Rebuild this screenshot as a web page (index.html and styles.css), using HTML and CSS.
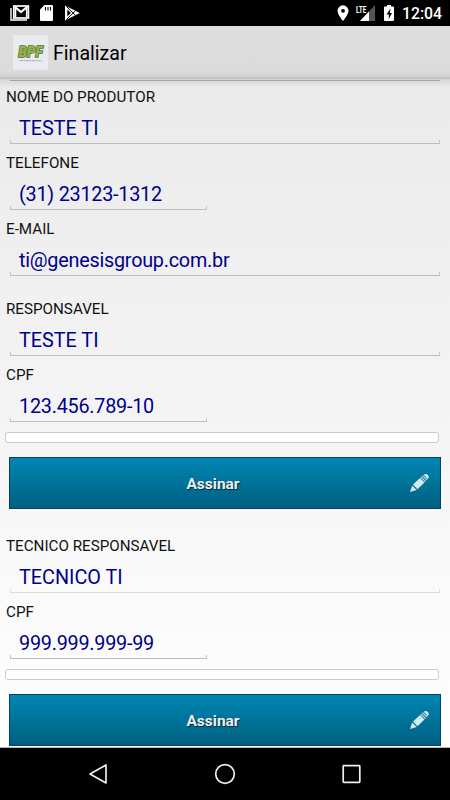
FILE: index.html
```html
<!DOCTYPE html>
<html lang="pt-BR">
<head>
  <meta charset="UTF-8">
  <meta name="viewport" content="width=device-width, initial-scale=1.0">
  <title>Finalizar</title>
  <link rel="stylesheet" href="styles.css">
</head>
<body>
  <div class="screen">
    <div class="status-bar">
      <svg class="status-icons" width="90" height="26" viewBox="0 0 90 26">
        <path d="M11 8v12h16" fill="none" stroke="#fff" stroke-width="1.4"/>
        <rect x="13.8" y="6" width="14.6" height="12" fill="none" stroke="#fff" stroke-width="1.7"/>
        <path d="M15 7l6 5 6-5" fill="none" stroke="#fff" stroke-width="2.2"/>
        <path d="M15.500 7v10M26.700 7v10" stroke="#fff" stroke-width="1.6"/>
        <path d="M44.5 5H52q1 0 1 1v14q0 1-1 1H41q-1 0-1-1V9.5z" fill="#fff"/>
        <path d="M45.5 7v3.5M48 7v3.5M50.5 7v3.5" stroke="#000" stroke-width="1.1"/>
        <path d="M65 5.5v15L79.8 13z" fill="#fff"/>
        <path d="M66.500 6.500l9 8.800M66.500 19.500l9-8.800" fill="none" stroke="#000" stroke-width="1"/>
        <path d="M67.300 9.500v7l3.600-3.500z" fill="#000"/>
      </svg>
      <svg class="status-icons" width="65" height="26" viewBox="337 0 65 26">
        <path d="M343 5.3a5.5 5.5 0 0 0-5.5 5.5c0 4 5.5 10.2 5.5 10.2s5.5-6.2 5.5-10.2A5.5 5.5 0 0 0 343 5.3z" fill="#fff"/>
        <circle cx="343" cy="10.8" r="1.900" fill="#000"/>
        <path d="M375 5v16h-15z" fill="#555"/>
        <path d="M369 11.4V21h-9z" fill="#fff"/>
        <text x="356" y="12.5" class="lte" textLength="10.5" lengthAdjust="spacingAndGlyphs" stroke="#000" stroke-width="1" paint-order="stroke">LTE</text>
        <path d="M387 5h4v1.5h2q1 0 1 1V20q0 1-1 1h-8q-1 0-1-1V7.5q0-1 1-1h2z" fill="#fff"/>
        <path d="M390.5 8.5l-4 6h2.300v4.500l3.200-6h-2z" fill="#000"/>
      </svg>
      <span class="clock">12:04</span>
    </div>

    <header class="action-bar">
      <svg class="logo" width="35" height="35" viewBox="0 0 35 35">
        <rect width="35" height="35" fill="#e9ebf1"/>
        <text x="5.500" y="22" class="logo-name" textLength="24" lengthAdjust="spacingAndGlyphs">BPF</text>
        <path d="M7 25.700h22" stroke="#8b8d91" stroke-width=".8" stroke-dasharray="3 .7 1.500 .6"/>
      </svg>
      <h1>Finalizar</h1>
    </header>

    <main class="form">
      <div class="previous-line"></div>
      <div class="field">
        <label>NOME DO PRODUTOR</label>
        <div class="input">TESTE TI</div>
      </div>
      <div class="field">
        <label>TELEFONE</label>
        <div class="input short tight">(31) 23123-1312</div>
      </div>
      <div class="field">
        <label>E-MAIL</label>
        <div class="input tight">ti@genesisgroup.com.br</div>
      </div>

      <div class="field section">
        <label>RESPONSAVEL</label>
        <div class="input">TESTE TI</div>
      </div>
      <div class="field">
        <label>CPF</label>
        <div class="input short tight">123.456.789-10</div>
      </div>
      <div class="signature"></div>
      <div class="sign-button">
        <span>Assinar</span>
        <svg class="pencil" width="20" height="20" viewBox="0 0 20 20">
          <path d="M1 19l2.200-6.500L7.700 17zM4 11.500L11 5l4.500 4.500L8.500 16.300zM14.700 1.800q2.300-1.800 4.200.2 1.700 2-.1 4.200z"/>
          <path d="M11.900 4l4.600 4.600M13.500 2.600l4.600 4.600" class="band"/>
        </svg>
      </div>

      <div class="field technician">
        <label>TECNICO RESPONSAVEL</label>
        <div class="input light">TECNICO TI</div>
      </div>
      <div class="field">
        <label>CPF</label>
        <div class="input short tight">999.999.999-99</div>
      </div>
      <div class="signature"></div>
      <div class="sign-button">
        <span>Assinar</span>
        <svg class="pencil" width="20" height="20" viewBox="0 0 20 20">
          <path d="M1 19l2.200-6.500L7.700 17zM4 11.500L11 5l4.500 4.500L8.500 16.300zM14.700 1.800q2.300-1.800 4.200.2 1.700 2-.1 4.200z"/>
          <path d="M11.900 4l4.600 4.600M13.500 2.600l4.600 4.600" class="band"/>
        </svg>
      </div>
    </main>

    <nav class="nav-bar">
      <svg width="22" height="22" viewBox="0 0 22 22"><path d="M19 2v18L3 11z"/></svg>
      <svg width="22" height="22" viewBox="0 0 22 22"><circle cx="11" cy="11" r="9.300"/></svg>
      <svg width="22" height="22" viewBox="0 0 22 22"><rect x="2.200" y="2.700" width="16.600" height="16.600" rx=".6"/></svg>
    </nav>
  </div>
</body>
</html>
```
FILE: styles.css
```css
* {
  margin: 0;
  padding: 0;
  box-sizing: border-box;
}

body {
  font-family: Roboto, "Liberation Sans", sans-serif;
  background: #000;
}

.screen {
  width: 450px;
  height: 800px;
  display: flex;
  flex-direction: column;
  overflow: hidden;
}

.status-bar {
  height: 26px;
  display: flex;
  align-items: center;
  background: #000;
  color: #fff;
}

.status-icons + .status-icons {
  margin-left: 247px;
}

.lte {
  font-size: 9px;
  font-weight: 700;
  fill: #fff;
}

.clock {
  font-size: 15.8px;
  font-weight: 500;
  line-height: 26px;
  padding-top: 2px;
}

.action-bar {
  height: 53px;
  display: flex;
  align-items: center;
  padding: 0 13px;
  background: linear-gradient(#dedede, #dbdbdb 46px, #d2d2d2 50px, #bdbdbd);
}

.logo {
  margin-right: 5px;
}

.logo-name {
  font-size: 15px;
  font-weight: 900;
  font-style: italic;
  fill: #91b83e;
  stroke: #59694c;
  stroke-width: 1.6px;
  paint-order: stroke;
}

.action-bar h1 {
  padding-top: 2px;
  font-size: 19.6px;
  font-weight: 400;
  color: #000;
}

.form {
  height: 669px;
  overflow: hidden;
  border-bottom: 1px solid #b5b8ba;
  background: linear-gradient(#d6d6d6 0, rgba(220, 220, 220, 0) 9px), linear-gradient(#eaeaea, #f4f4f4 50%, #fff);
}

.previous-line {
  width: 430px;
  height: 2px;
  margin: 0 0 6px 10px;
  border-bottom: 1px solid #a3a3a3;
}

.field {
  height: 66px;
}

.field label {
  display: block;
  height: 19px;
  padding-left: 6px;
  font-size: 15.2px;
  line-height: 20px;
  color: #111;
}

/* Underline with short upturned ends */
.input {
  width: 430px;
  height: 38px;
  margin-left: 10px;
  padding-left: 9px;
  font-size: 19.8px;
  line-height: 46px;
  color: #00008b;
  background:
    linear-gradient(#bdbdbd, #bdbdbd) 0 100% / 100% 1px no-repeat,
    linear-gradient(#c8c8c8, #c8c8c8) 0 100% / 1px 4px no-repeat,
    linear-gradient(#c8c8c8, #c8c8c8) 100% 100% / 1px 4px no-repeat;
}

.input.short {
  width: 197px;
}

.input.tight {
  letter-spacing: -0.23px;
}

.input.light {
  background:
    linear-gradient(#dedede, #dedede) 0 100% / 100% 1px no-repeat,
    linear-gradient(#dedede, #dedede) 0 100% / 1px 4px no-repeat,
    linear-gradient(#dedede, #dedede) 100% 100% / 1px 4px no-repeat;
}

.section {
  margin-top: 14px;
}

.signature {
  width: 434px;
  height: 11px;
  margin: 1px 0 14px 5px;
  border: 1px solid #cbcbcb;
  border-radius: 3px;
  background: #fff;
}

.sign-button {
  position: relative;
  width: 432px;
  height: 52px;
  margin-left: 9px;
  padding-right: 24px;
  border: 1px solid #00406b;
  background: linear-gradient(#0086b3, #006080);
  color: #eee;
  font-size: 15.5px;
  font-weight: 700;
  line-height: 52px;
  text-align: center;
  text-shadow: 1px 1px 1px #002b45;
}

.pencil {
  position: absolute;
  top: 15px;
  right: 11px;
  fill: #d5e8ee;
}

.pencil .band {
  fill: none;
  stroke: #c3dde6;
  stroke-width: 1.2px;
}

.technician {
  margin-top: 27px;
}

.nav-bar {
  height: 52px;
  display: flex;
  justify-content: center;
  align-items: center;
  gap: 105px;
  background: #000;
}

.nav-bar svg {
  fill: none;
  stroke: #eee;
  stroke-width: 1.7px;
  stroke-linejoin: round;
}
```
